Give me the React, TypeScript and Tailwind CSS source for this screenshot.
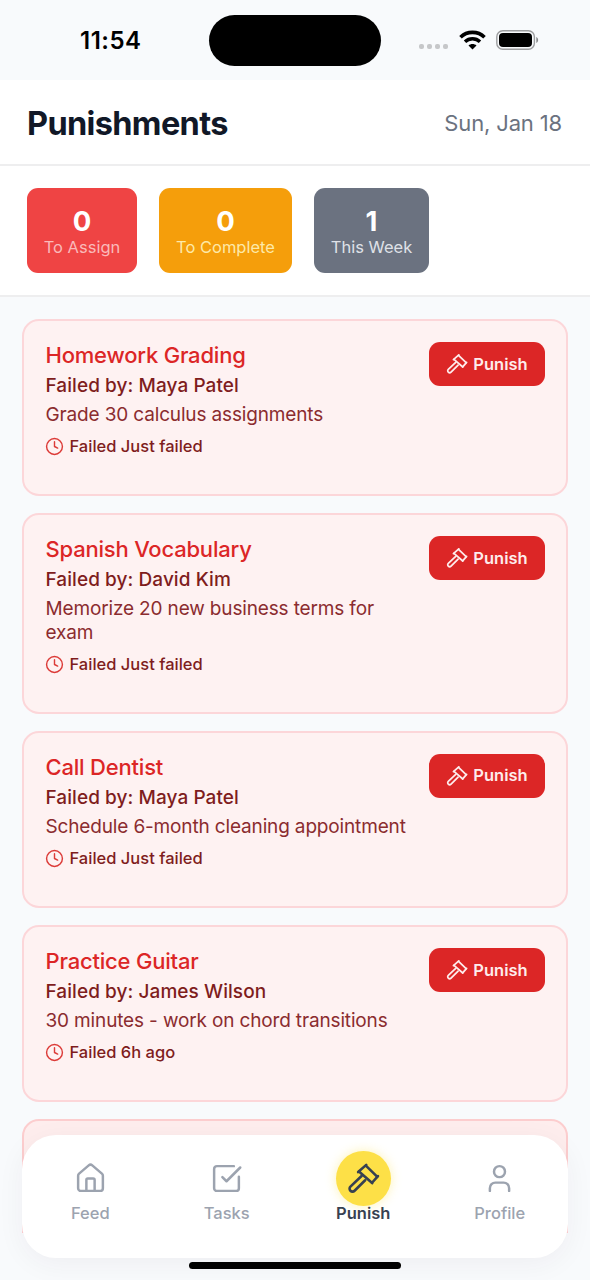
import React from "react";
import { Clock, House, SquareCheckBig, User } from "lucide-react";

type FailedTask = {
    title: string;
    failedBy: string;
    description: string;
    time: string;
};

const tasks: FailedTask[] = [
    { title: "Homework Grading", failedBy: "Maya Patel", description: "Grade 30 calculus assignments", time: "Just failed" },
    { title: "Spanish Vocabulary", failedBy: "David Kim", description: "Memorize 20 new business terms for exam", time: "Just failed" },
    { title: "Call Dentist", failedBy: "Maya Patel", description: "Schedule 6-month cleaning appointment", time: "Just failed" },
    { title: "Practice Guitar", failedBy: "James Wilson", description: "30 minutes - work on chord transitions", time: "6h ago" },
];

const GavelIcon: React.FC<{ size: number }> = ({ size }) => (
    <svg width={size} height={size} viewBox="0 0 24 24" fill="none" stroke="currentColor" strokeWidth={1.9} strokeLinecap="round" strokeLinejoin="round">
        <path d="m13.2 13.3-7.7 7.6c-.83.83-2.17.83-3 0a2.12 2.12 0 0 1 0-3L10.6 10.2" />
        <path d="m8.1 7.3 5.9-5.2" />
        <path d="m13.7 2.6 8.2 8" />
        <path d="m22.5 10.2-4.3 4.9" />
        <path d="m8.7 6.9 9.6 8.4" />
    </svg>
);

const StatusBar: React.FC = () => (
    <div className="flex h-20 shrink-0 items-start pl-20 pr-[51px] pt-[15px]">
        <div className="w-[129px] text-[24px] font-semibold leading-[52px] tracking-[0.5px] text-black">11:54</div>
        <div className="h-[51px] w-[173px] rounded-full bg-black" />
        <div className="ml-[38px] flex h-[49px] w-[120px] items-center">
            <div className="mt-[13px] flex gap-[3px]">
                <div className="size-[5px] rounded-[2px] bg-[#c6c7c9]" />
                <div className="size-[5px] rounded-[2px] bg-[#c6c7c9]" />
                <div className="size-[5px] rounded-[2px] bg-[#c6c7c9]" />
                <div className="size-[5px] rounded-[2px] bg-[#c6c7c9]" />
            </div>
            <svg className="ml-[11px] shrink-0" width="27" height="20" viewBox="0 0 27 20" fill="none" stroke="#000">
                <path d="M1.5 7.2C8 .7 19 .7 25.5 7.2" strokeWidth="3.6" />
                <path d="M6 11.7C10.2 7.7 16.8 7.7 21 11.7" strokeWidth="3.4" />
                <path d="M9.5 15.5C11.7 13.5 15.3 13.5 17.5 15.5L13.5 19.5Z" fill="#000" stroke="none" />
            </svg>
            <svg className="ml-2.5 shrink-0" width="43" height="20" viewBox="0 0 43 20">
                <rect x=".8" y=".8" width="37.6" height="18.4" rx="6" fill="none" stroke="#9d9ea0" strokeWidth="1.4" />
                <rect x="3" y="3" width="33" height="14" rx="4" fill="#000" />
                <path d="M40.3 7v6c2.4-.8 2.4-5.2 0-6Z" fill="#88898b" />
            </svg>
        </div>
    </div>
);

const TaskCard: React.FC<{ task: FailedTask }> = ({ task }) => (
    <div className="flex shrink-0 items-start justify-between rounded-[17px] border-2 border-[#fcd6d9] bg-[#fef2f2] px-[21px] pb-[37px] pt-[21px]">
        <div className="w-[368px] pl-[0.5px]">
            <div className="text-[22px] font-medium leading-[27px] tracking-[-0.2px] text-[#dc2626]">{task.title}</div>
            <div className="mt-[5px] text-[19px] font-medium leading-6 tracking-[0.07px] text-[#7f1d1d]">Failed by: {task.failedBy}</div>
            <div className="mt-[5px] text-[19px] leading-[23.25px] tracking-[-0.15px] text-[#8b2c2f]">{task.description}</div>
            <div className="mt-[10px] flex items-center gap-[5.5px] text-[16.5px] font-medium leading-[21px] text-[#7f1d1d]">
                <Clock size={19} strokeWidth={1.8} className="-ml-[0.5px] text-[#dc3b38]" />
                <span>Failed {task.time}</span>
            </div>
        </div>
        <button className="flex h-[44px] w-[116px] items-center justify-center gap-[5px] rounded-[11px] bg-[#dc2626] text-[16.5px] font-semibold text-[#feecec]">
            <GavelIcon size={22} />
            <span>Punish</span>
        </button>
    </div>
);

const App: React.FC = () => {
    return (
        <div className="relative flex h-[1280px] w-[590px] flex-col overflow-hidden bg-[#f8fafc] font-['Inter',sans-serif]">
            <StatusBar />

            <header className="flex h-[86px] shrink-0 items-center justify-between border-b-2 border-[#eeeeef] bg-white px-[27px] pt-[2px]">
                <h1 className="pt-0.5 text-[32.5px] font-bold tracking-[-0.65px] text-[#111827]">Punishments</h1>
                <div className="pr-px text-[22px] tracking-[-0.15px] text-[#6b7280]">Sun, Jan 18</div>
            </header>

            <section className="flex h-[131px] shrink-0 items-start gap-[22px] border-b-2 border-[#eeeeef] bg-white px-[27px] pt-[22px] text-center">
                <div className="h-[85px] w-[110px] rounded-[11px] bg-[#ef4444] pt-4">
                    <div className="text-[27.5px] font-bold leading-[34px] text-white">0</div>
                    <div className="text-[16.5px] leading-[19px] text-[#fab9b9]">To Assign</div>
                </div>
                <div className="h-[85px] w-[133px] rounded-[11px] bg-[#f59e0b] pt-4">
                    <div className="text-[27.5px] font-bold leading-[34px] text-white">0</div>
                    <div className="text-[16.5px] leading-[19px] text-[#fde9a8]">To Complete</div>
                </div>
                <div className="h-[85px] w-[115px] rounded-[11px] bg-[#6b7280] pt-4">
                    <div className="text-[27.5px] font-bold leading-[34px] text-white">1</div>
                    <div className="text-[16.5px] leading-[19px] text-[#dfe1e7]">This Week</div>
                </div>
            </section>

            <main className="flex h-[936px] shrink-0 flex-col gap-[17px] overflow-hidden px-[22px] pt-[22px]">
                {tasks.map((task) => (
                    <TaskCard key={task.title} task={task} />
                ))}
                <div className="h-[178px] shrink-0 rounded-[17px] border-2 border-[#fccdce] bg-[#feeded]" />
            </main>

            <nav className="absolute left-[22px] top-[1135px] grid h-[123px] w-[546px] grid-cols-4 rounded-[34px] bg-white pt-4 text-center text-[16.5px] font-medium leading-[14px] text-[#9ca3af] shadow-[0_6px_28px_rgba(60,20,60,0.05)]">
                <div className="flex flex-col items-center">
                    <div className="flex size-[55px] items-center justify-center"><House size={33} strokeWidth={1.8} /></div>
                    <span>Feed</span>
                </div>
                <div className="flex flex-col items-center">
                    <div className="flex size-[55px] items-center justify-center"><SquareCheckBig size={33} strokeWidth={1.8} /></div>
                    <span>Tasks</span>
                </div>
                <div className="flex flex-col items-center font-semibold text-[#374151]">
                    <div className="flex size-[55px] items-center justify-center rounded-full bg-[#fde047] shadow-[0_0_11px_rgba(253,224,71,0.4)]"><GavelIcon size={33} /></div>
                    <span>Punish</span>
                </div>
                <div className="flex flex-col items-center">
                    <div className="flex size-[55px] items-center justify-center"><User size={33} strokeWidth={1.8} /></div>
                    <span>Profile</span>
                </div>
            </nav>

            <div className="absolute left-[189px] top-[1262px] h-[7px] w-[212px] rounded-full bg-black" />
        </div>
    );
};

export default App;
